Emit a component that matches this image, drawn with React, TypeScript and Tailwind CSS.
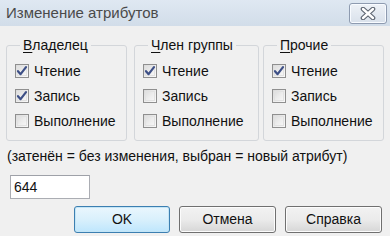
import React from "react";

function Check({ checked }: { checked: boolean }) {
  return (
    <span className="relative inline-flex h-[14px] w-[14px] shrink-0 items-center justify-center border border-[#8f8f8f] bg-gradient-to-br from-[#d9d9d9] via-[#ececec] to-[#fafafa]">
      <span className="absolute inset-[1px] border border-[#e2e2e2]" />
      {checked && (
        <svg width="12" height="12" viewBox="0 0 12 12" className="relative">
          <path d="M2 6.2 L4.6 9.2 L10 2.2" fill="none" stroke="#3d4f86" strokeWidth="2.2" strokeLinecap="round" strokeLinejoin="round" />
        </svg>
      )}
    </span>
  );
}

function Group({
  title,
  ul,
  rest,
  checks,
  width,
}: {
  title: string;
  ul: string;
  rest: string;
  checks: boolean[];
  width: string;
}) {
  const labels = ["Чтение", "Запись", "Выполнение"];
  return (
    <fieldset className={`${width} h-[104px] shrink-0 rounded-[3px] border border-[#d3d6da] px-[8px] pt-[2px]`}>
      <legend className="ml-[5px] px-[3px] text-[14px] leading-[16px] text-[#111]">
        <span className="underline decoration-1 underline-offset-2">{ul}</span>
        {rest}
      </legend>
      <div className="flex flex-col gap-[11px] pt-[9px]">
        {labels.map((l, i) => (
          <div key={l} className="flex h-[14px] items-center gap-[5px] text-[14px] leading-[14px] text-[#111]">
            <Check checked={checks[i]} />
            <span>{l}</span>
          </div>
        ))}
      </div>
    </fieldset>
  );
}

export default function App() {
  return (
    <div
      className="h-[236px] w-[390px] overflow-hidden bg-[#f0f0f0] text-[#111]"
      style={{ fontFamily: '"Liberation Sans", Arial, sans-serif' }}
    >
      <div className="flex h-[26px] items-center justify-between bg-gradient-to-b from-[#dfe8f2] to-[#d2dde9] pl-[6px] pr-[3px]">
        <span className="text-[15px] leading-[18px] text-[#4a4a4a]">Изменение атрибутов</span>
        <div className="flex h-[21px] w-[38px] items-center justify-center rounded-[3px] border border-[#8e9bb0] bg-gradient-to-b from-[#eef2f7] to-[#d9e1eb] shadow-[inset_0_0_0_1px_#f8fbff]">
          <svg width="16" height="13" viewBox="0 0 16 13">
            <path d="M3 2 L13 11 M13 2 L3 11" stroke="#5c6470" strokeWidth="4.6" strokeLinecap="round" />
            <path d="M3 2 L13 11 M13 2 L3 11" stroke="#ffffff" strokeWidth="2.4" strokeLinecap="round" />
          </svg>
        </div>
      </div>

      <div className="px-[6px] pt-[11px]">
        <div className="flex">
          <Group title="Владелец" ul="В" rest="ладелец" checks={[true, true, false]} width="w-[121px]" />
          <div className="w-[7px] shrink-0" />
          <Group title="Член группы" ul="Ч" rest="лен группы" checks={[true, false, false]} width="w-[125px]" />
          <div className="w-[4px] shrink-0" />
          <Group title="Прочие" ul="П" rest="рочие" checks={[true, false, false]} width="w-[121px]" />
        </div>

        <div className="mt-[7px] pl-[1px] text-[14px] leading-[16px] text-[#111]">
          (затенён = без изменения, выбран = новый атрибут)
        </div>

        <div className="mt-[11px] pl-[4px]">
          <div className="flex h-[24px] w-[80px] items-center border border-[#abadb3] border-t-[#9ea1a8] bg-white pl-[3px] text-[14px] text-[#111]">
            644
          </div>
        </div>

        <div className="mt-[7px] flex justify-end gap-[9px] pr-[2px]">
          <button className="flex h-[27px] w-[96px] items-center justify-center rounded-[3px] border border-[#3c7fb1] bg-gradient-to-b from-[#eaf6fd] via-[#d9f0fc] to-[#bee6fd] text-[14px] text-[#111] shadow-[inset_0_0_0_1px_#c4e5f6]">
            OK
          </button>
          <button className="flex h-[27px] w-[97px] items-center justify-center rounded-[3px] border border-[#707070] bg-gradient-to-b from-[#f2f2f2] via-[#ebebeb] to-[#d6d6d6] text-[14px] text-[#111] shadow-[inset_0_0_0_1px_#fcfcfc]">
            Отмена
          </button>
          <button className="flex h-[27px] w-[97px] items-center justify-center rounded-[3px] border border-[#707070] bg-gradient-to-b from-[#f2f2f2] via-[#ebebeb] to-[#d6d6d6] text-[14px] text-[#111] shadow-[inset_0_0_0_1px_#fcfcfc]">
            Справка
          </button>
        </div>
      </div>
    </div>
  );
}
